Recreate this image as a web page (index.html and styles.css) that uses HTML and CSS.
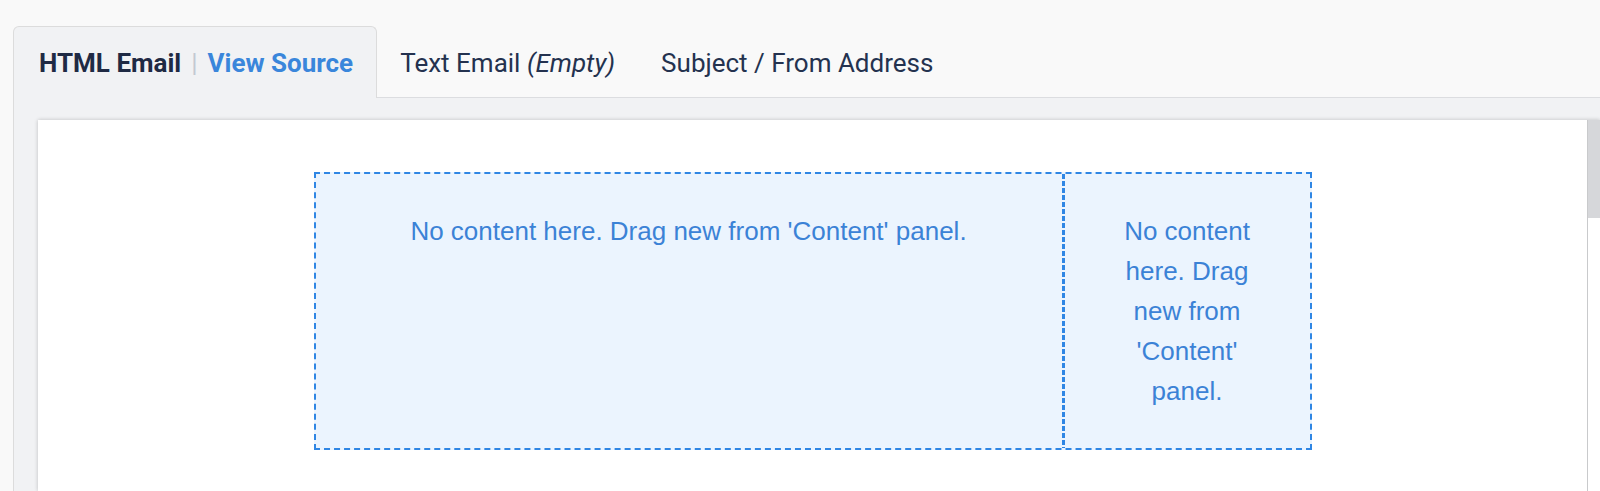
FILE: index.html
```html
<!DOCTYPE html>
<html>
<head>
<meta charset="utf-8">
<link rel="stylesheet" href="styles.css">
</head>
<body>
<div class="tabs">
  <div class="tab tab-active">
    <span class="tab-title">HTML Email</span>
    <span class="tab-sep">|</span>
    <span class="tab-link">View Source</span>
  </div>
  <div class="tab">Text Email&nbsp;<em>(Empty)</em></div>
  <div class="tab">Subject / From Address</div>
</div>
<div class="panel">
  <div class="canvas">
    <div class="canvas-body">
      <div class="drop-row">
        <div class="drop-cell">No content here. Drag new from 'Content' panel.</div>
        <div class="drop-sep"></div>
        <div class="drop-cell">No content here. Drag new from 'Content' panel.</div>
      </div>
    </div>
    <div class="scrollbar"></div>
  </div>
</div>
</body>
</html>
```
FILE: styles.css
```css
html, body {
  margin: 0;
  padding: 0;
}
body {
  width: 1600px;
  height: 491px;
  overflow: hidden;
  background: #f9f9f9;
  font-family: "Liberation Sans", Arial, sans-serif;
}
.tabs {
  display: flex;
  align-items: flex-end;
  margin-left: 13px;
  padding-top: 26px;
  border-bottom: 1px solid #dcdde0;
  font-family: Roboto, "Liberation Sans", sans-serif;
  font-size: 26px;
  color: #24324f;
}
.tab {
  height: 72px;
  margin-bottom: -1px;
  padding: 0 22px;
  display: flex;
  align-items: center;
  box-sizing: border-box;
  border: 1px solid transparent;
  border-bottom: none;
}
.tab em {
  font-style: italic;
}
.tab-active {
  background: #f1f2f4;
  border-color: #dcdcdc;
  border-radius: 6px 6px 0 0;
  padding: 0 23px 0 25px;
}
.tab-title {
  font-weight: 700;
  color: #1f2a44;
}
.tab-sep {
  color: #c3c9d2;
  margin: 0 10px;
  font-weight: 400;
}
.tab-link {
  font-weight: 700;
  color: #3a86db;
}
.panel {
  margin-left: 13px;
  border-left: 1px solid #dcdcdc;
  background: #f1f2f4;
  padding: 22px 0 0 24px;
  height: 371px;
}
.canvas {
  display: flex;
  height: 100%;
  background: #fff;
  box-shadow: 0 0 4px rgba(0, 0, 0, 0.22);
}
.canvas-body {
  flex: 1;
  padding-top: 52px;
}
.drop-row {
  width: 998px;
  margin: 0 auto;
  box-sizing: border-box;
  display: grid;
  grid-template-columns: 746px 3px 1fr;
  border: 2px dashed #2f86e4;
  background: #ebf4fe;
}
.drop-cell {
  padding: 37px 40px;
  text-align: center;
  font-size: 26px;
  line-height: 40px;
  color: #3b82d6;
}
.drop-sep {
  background: repeating-linear-gradient(to bottom, #2f86e4 0, #2f86e4 5px, transparent 5px, transparent 7px);
}
.scrollbar {
  width: 12px;
  border-left: 1px solid #c9cacc;
  background: linear-gradient(to bottom, #d6d7da 0, #d6d7da 98px, #ffffff 98px);
}
```
